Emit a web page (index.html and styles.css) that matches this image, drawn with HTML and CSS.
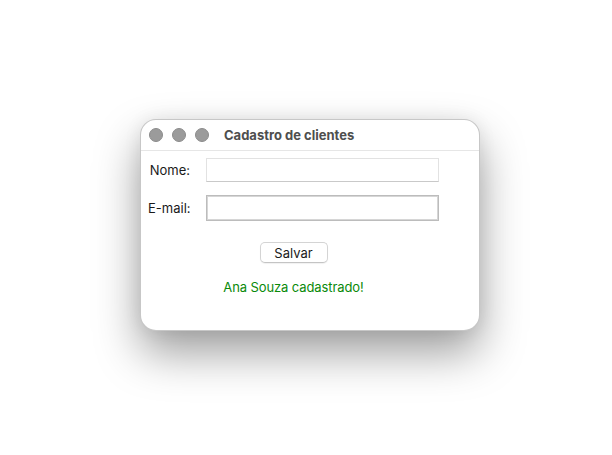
FILE: index.html
```html
<!DOCTYPE html>
<html lang="pt">
<head>
<meta charset="utf-8">
<title>Cadastro de clientes</title>
<link rel="stylesheet" href="styles.css">
</head>
<body>
<div class="window">
  <div class="titlebar">
    <div class="lights">
      <span class="light"></span>
      <span class="light"></span>
      <span class="light"></span>
    </div>
    <div class="title">Cadastro de clientes</div>
  </div>
  <div class="content">
    <div class="form">
      <div class="grid">
        <label class="label" for="nome">Nome:</label>
        <input class="field" id="nome" type="text">
        <label class="label" for="email">E-mail:</label>
        <input class="field focused" id="email" type="text">
      </div>
      <div class="actions">
        <button class="button" type="button">Salvar</button>
      </div>
      <div class="message">Ana Souza cadastrado!</div>
    </div>
  </div>
</div>
</body>
</html>
```
FILE: styles.css
```css
html, body {
  margin: 0;
  padding: 0;
  background: #ffffff;
}
body {
  min-height: 455px;
  padding-top: 119px;
  box-sizing: border-box;
  font-family: Inter, "Liberation Sans", Arial, sans-serif;
  font-size: 13px;
  color: #1a1a1a;
}
.window {
  box-sizing: border-box;
  width: 340px;
  height: 212px;
  margin-left: 140px;
  background: #ffffff;
  border: 1px solid rgba(0, 0, 0, 0.22);
  border-radius: 16px;
  box-shadow: 0 22px 45px rgba(0, 0, 0, 0.38), 0 0 18px rgba(0, 0, 0, 0.07);
  overflow: hidden;
}
.titlebar {
  box-sizing: border-box;
  height: 31px;
  display: flex;
  align-items: center;
  padding-left: 8px;
  border-bottom: 1px solid #e6e6e6;
}
.lights {
  display: flex;
  gap: 9px;
}
.light {
  width: 14px;
  height: 14px;
  border-radius: 50%;
  background: #9b9b9b;
  box-sizing: border-box;
  border: 1px solid #8c8c8c;
}
.title {
  margin-left: 15px;
  font-weight: 700;
  font-size: 13px;
  color: #4e4e4e;
}
.content {
  padding: 7px 0 0 7px;
}
.form {
  width: 291px;
}
.grid {
  display: grid;
  grid-template-columns: 42px 233px;
  column-gap: 16px;
  row-gap: 13px;
  align-items: center;
}
.label {
  text-align: right;
  font-size: 13px;
  color: #1a1a1a;
  white-space: nowrap;
}
.field {
  box-sizing: border-box;
  width: 233px;
  height: 24px;
  margin: 0;
  border: 1px solid #e2e2e2;
  border-bottom-color: #c9c9c9;
  border-radius: 0;
  background: #ffffff;
  outline: none;
  font: inherit;
}
.field.focused {
  height: 26px;
  border: 1px solid #bcbcbc;
  box-shadow: inset 0 0 0 1px #d6d6d6;
}
.actions {
  display: flex;
  justify-content: center;
  margin-top: 21px;
}
.button {
  box-sizing: border-box;
  width: 68px;
  height: 21px;
  padding: 0;
  margin: 0;
  background: #ffffff;
  border: 1px solid #d4d4d4;
  border-bottom-color: #c4c4c4;
  border-radius: 5px;
  box-shadow: 0 1px 1px rgba(0, 0, 0, 0.06);
  font: inherit;
  font-size: 13px;
  color: #1a1a1a;
}
.message {
  margin-top: 16px;
  text-align: center;
  color: #0a8a0a;
  font-size: 13px;
  line-height: 16px;
  letter-spacing: -0.1px;
}
```
